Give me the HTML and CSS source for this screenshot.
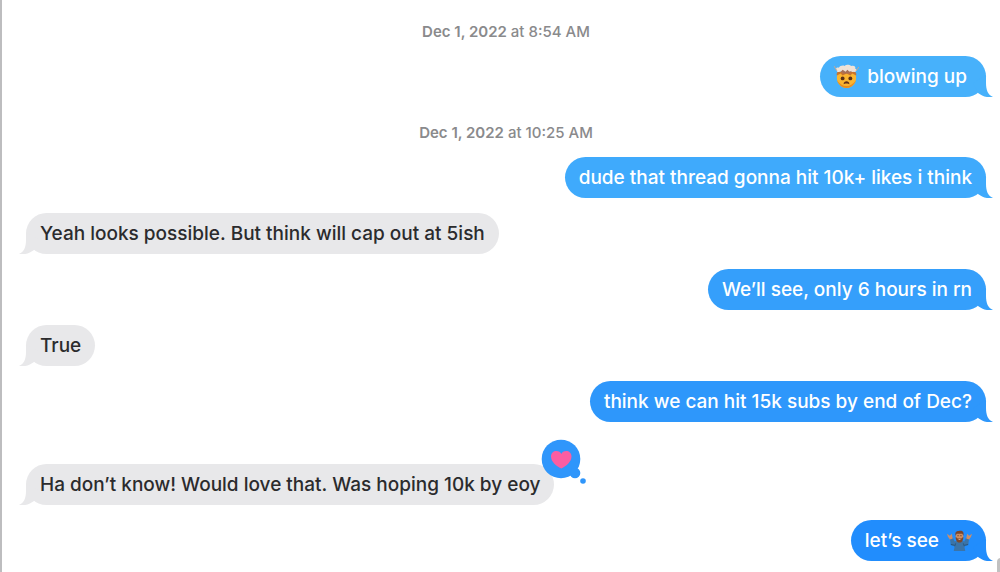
FILE: index.html
```html
<!DOCTYPE html>
<html lang="en">
<head>
    <meta charset="UTF-8">
    <meta name="viewport" content="width=device-width, initial-scale=1.0">
    <title>Messages</title>
    <link rel="stylesheet" href="styles.css">
</head>
<body>
    <!-- Shared bubble tail -->
    <svg class="symbols" aria-hidden="true">
        <symbol id="tail" viewBox="0 0 28 24">
            <path d="M21 2V10C21 17 23 22 28 24C22 25 17 23 13 20L8 10Z"/>
        </symbol>
    </svg>

    <main class="chat">
        <p class="date"><b>Dec 1, 2022</b> at 8:54 AM</p>
        <div class="message sent tone-1">
            <svg class="emoji" viewBox="0 0 26 26" role="img" aria-label="🤯">
                <path d="M3 14C3 9 6 8 13 8S23 9 23 14C23 21 18 25 13 25S3 21 3 14Z" fill="#fbb52f"/>
                <path d="M3 17C5 22 9 25 13 25S21 22 23 17C20 21 17 23 13 23S6 21 3 17Z" fill="#e88c20"/>
                <path d="M3 12C2 9 4 7 7 8H19C22 7 24 9 23 12L19 10L17 12L13 10L9 12L7 10Z" fill="#c9742f"/>
                <path d="M3 7C1 5 3 3 5 4C6 2 9 1 11 2C14 0 16 1 18 2C21 1 23 3 22 5C25 6 23 9 20 8C17 9 15 7 13 9C10 10 8 7 6 8C4 9 3 8 3 7Z" fill="#efe2d6"/>
                <path d="M7 8L9 6L12 8L14 6L16 8L19 7L16 10H10Z" fill="#a86f55"/>
                <path d="M0 2L3 7M26 3L23 7" stroke="#cda789"/>
                <circle cx="9" cy="15" r="2" fill="#5a3016"/>
                <circle cx="17" cy="15" r="2" fill="#5a3016"/>
                <path d="M10 21C10 17 16 17 16 21C15 20 11 20 10 21Z" fill="#642f18"/>
            </svg>
            <span>blowing up&nbsp;</span>
            <svg class="tail"><use href="#tail"/></svg>
        </div>

        <p class="date"><b>Dec 1, 2022</b> at 10:25 AM</p>
        <div class="message sent tone-2">
            <span>dude that thread gonna hit 10k+ likes i think</span>
            <svg class="tail"><use href="#tail"/></svg>
        </div>
        <div class="message received">
            <span>Yeah looks possible. But think will cap out at 5ish</span>
            <svg class="tail"><use href="#tail"/></svg>
        </div>
        <div class="message sent tone-3">
            <span>We’ll see, only 6 hours in rn</span>
            <svg class="tail"><use href="#tail"/></svg>
        </div>
        <div class="message received">
            <span>True</span>
            <svg class="tail"><use href="#tail"/></svg>
        </div>
        <div class="message sent tone-4">
            <span>think we can hit 15k subs by end of Dec?</span>
            <svg class="tail"><use href="#tail"/></svg>
        </div>
        <div class="message received reacted">
            <span>Ha don’t know! Would love that. Was hoping 10k by eoy</span>
            <svg class="tail"><use href="#tail"/></svg>
            <svg class="reaction" viewBox="0 0 46 46" role="img" aria-label="❤">
                <g fill="#2f96fb">
                    <circle cx="20" cy="20" r="19.3"/>
                    <circle cx="34" cy="34" r="5.3"/>
                    <circle cx="42" cy="42" r="2.8"/>
                </g>
                <path d="M20.3 29.5C15 27 10 22.5 10 17.5C10 14 12.5 12 15.3 12C17.8 12 19.5 13.3 20.3 15C21.1 13.3 22.8 12 25.3 12C28 12 30.5 14 30.5 17.5C30.5 22.5 25.5 27 20.3 29.5Z" fill="#fb5da2"/>
            </svg>
        </div>
        <div class="message sent tone-5">
            <span>let’s see</span>
            <svg class="emoji" viewBox="0 0 26 26" role="img" aria-label="🤷🏽‍♂️">
                <path d="M7 24L8 19L4 18L3 11L6 10L8 14L11 13H15L18 14L20 10L23 11L22 18L18 19L19 24Z" fill="#3b74a8"/>
                <path d="M8 19L9 16M18 19L17 16M4 17L8 18M22 17L18 18" stroke="#285782"/>
                <path d="M3 12L1 9L0 6L3 8L5 6L6 11ZM23 12L25 9L26 6L23 8L21 6L20 11Z" fill="#c98f6c"/>
                <ellipse cx="13" cy="9" rx="4" ry="5" fill="#ce8e62"/>
                <path d="M9 9C9 15 12 15 13 15S17 15 17 9L15 11H11Z" fill="#7d482c"/>
                <path d="M9 8C8 4 10 3 12 3C16 2 18 4 17 8L16 6H10Z" fill="#7a452c"/>
                <path d="M11 8H12M14 8H15" stroke="#4b2e22"/>
                <path d="M12 12H14" stroke="#d9a58a"/>
            </svg>
            <svg class="tail"><use href="#tail"/></svg>
        </div>
        <div class="scroll-thumb"></div>
    </main>
</body>
</html>
```

FILE: styles.css
```css
/* General Styling */
* {
    box-sizing: border-box;
}
body {
    margin: 0;
    background: #fff;
    color: #2b2b2d;
    font-family: Inter, "Liberation Sans", sans-serif;
    font-weight: 500;
}
.symbols {
    position: absolute;
    width: 0;
    height: 0;
}

/* Conversation */
.chat {
    display: flex;
    flex-direction: column;
    position: relative;
    min-height: 100vh;
    overflow: hidden;
    padding: 22px 14px 8px 24px;
    border-left: 2px solid #bdbdbf;
}
.date {
    margin: 0 0 14px;
    color: #8a8a8c;
    font-size: 15px;
    line-height: 20px;
    text-align: center;
}
.date b {
    font-weight: 600;
}
.message + .date {
    margin-top: 26px;
}

/* Bubbles */
.message {
    display: flex;
    align-items: center;
    gap: 8px;
    position: relative;
    max-width: 80%;
    padding: 8px 14px;
    border-radius: 21px;
    background: var(--bubble);
    font-size: 19px;
    line-height: 25px;
}
.message + .message {
    margin-top: 15px;
}
.message + .reacted {
    margin-top: 42px;
}
.sent {
    align-self: flex-end;
    color: #fff;
}
.received {
    --bubble: #e8e8ea;
    align-self: flex-start;
}

/* Sent bubbles get deeper towards the bottom */
.tone-1 { --bubble: #47b1fb; }
.tone-2 { --bubble: #3faafc; }
.tone-3 { --bubble: #359ffb; }
.tone-4 { --bubble: #2e97fb; }
.tone-5 { --bubble: #218dfd; }

.tail {
    position: absolute;
    right: -7px;
    bottom: 0;
    width: 28px;
    height: 24px;
    fill: var(--bubble);
}
.received .tail {
    right: auto;
    left: -7px;
    transform: scaleX(-1);
}
.message span {
    position: relative;
    z-index: 1;
}
.emoji {
    flex: none;
    position: relative;
    z-index: 1;
    width: 25px;
    height: 25px;
}
.reaction {
    position: absolute;
    top: -25px;
    right: -33px;
    width: 46px;
    height: 46px;
}

/* Scrollbar */
.scroll-thumb {
    position: absolute;
    right: -5px;
    bottom: -8px;
    width: 8px;
    height: 22px;
    border-radius: 4px;
    background: #c1c1c1;
}
```
